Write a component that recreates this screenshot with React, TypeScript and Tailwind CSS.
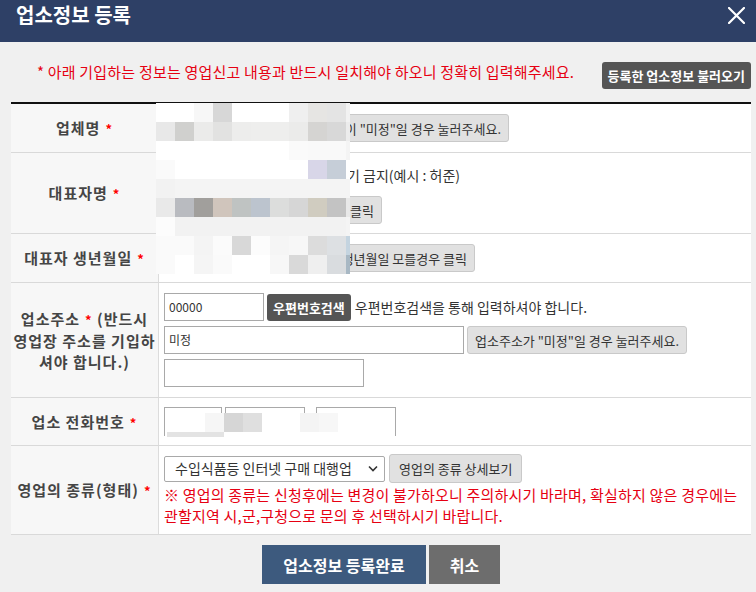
import React from "react";

const mosaic: string[][] = [
  ["bg-[#ffffff]", "bg-[#ffffff]", "bg-[#f7f7f7]", "bg-[#d7d7d7]", "bg-[#ffffff]", "bg-[#ffffff]", "bg-[#ffffff]", "bg-[#efefef]", "bg-[#e6e5e3]", "bg-[#e4e4e4]", "bg-[#f2f2f2]"],
  ["bg-[#e8e8e8]", "bg-[#d0d0ce]", "bg-[#ebebea]", "bg-[#e2e2e1]", "bg-[#ededec]", "bg-[#eeeeed]", "bg-[#eeeeed]", "bg-[#ebebea]", "bg-[#d5d4d2]", "bg-[#d8d8d8]", "bg-[#ececec]"],
  ["bg-[#ffffff]", "bg-[#ffffff]", "bg-[#ffffff]", "bg-[#ffffff]", "bg-[#ffffff]", "bg-[#ffffff]", "bg-[#ffffff]", "bg-[#fafafa]", "bg-[#f9f9f9]", "bg-[#f9f9f9]", "bg-[#f4f4f4]"],
  ["bg-[#fafafa]", "bg-[#ffffff]", "bg-[#ffffff]", "bg-[#ffffff]", "bg-[#ffffff]", "bg-[#ffffff]", "bg-[#ffffff]", "bg-[#ffffff]", "bg-[#d8d6e8]", "bg-[#c6ced8]", "bg-[#ffffff]"],
  ["bg-[#f2f2f2]", "bg-[#f4f4f4]", "bg-[#f4f4f4]", "bg-[#f4f4f4]", "bg-[#f4f4f4]", "bg-[#f4f4f4]", "bg-[#f4f4f4]", "bg-[#f4f4f4]", "bg-[#f4f4f4]", "bg-[#f4f4f4]", "bg-[#f4f4f4]"],
  ["bg-[#e9e9e9]", "bg-[#b9bbc0]", "bg-[#a19f9c]", "bg-[#d0c5bc]", "bg-[#bfc3c2]", "bg-[#bcc4ce]", "bg-[#dcdddc]", "bg-[#d6d6d6]", "bg-[#d0ccc0]", "bg-[#c3c3c3]", "bg-[#e8e8e8]"],
  ["bg-[#fcfcfc]", "bg-[#f2f2f2]", "bg-[#f2f2f2]", "bg-[#f2f2f2]", "bg-[#f2f2f2]", "bg-[#f2f2f2]", "bg-[#f2f2f2]", "bg-[#f2f2f2]", "bg-[#f2f2f2]", "bg-[#f2f2f2]", "bg-[#f4f4f4]"],
  ["bg-[#fafafa]", "bg-[#fafafa]", "bg-[#f4f4f4]", "bg-[#fbfbfb]", "bg-[#d8d8d8]", "bg-[#fcfcfc]", "bg-[#f5f5f5]", "bg-[#f7f7f7]", "bg-[#dcdcdc]", "bg-[#dde0e3]", "bg-[#c4d4e0]"],
  ["bg-[#fafafa]", "bg-[#ffffff]", "bg-[#f5f5f5]", "bg-[#fafafa]", "bg-[#ffffff]", "bg-[#ffffff]", "bg-[#f7f7f7]", "bg-[#d9d9d9]", "bg-[#efefef]", "bg-[#d9dcdf]", "bg-[#a8b8c4]"],
];

function GrayBtn({ children }: { children: React.ReactNode }) {
  return (
    <button className="h-[28px] shrink-0 whitespace-nowrap rounded-[3px] border border-[#c9c9c9] bg-[#e1e1e1] px-[7px] text-[13px] leading-none text-[#333]">
      {children}
    </button>
  );
}

function Star() {
  return <span className="ml-[5px] text-[13px] font-bold text-[#ff0000]">*</span>;
}

function Label({ children }: { children: React.ReactNode }) {
  return (
    <div className="flex w-[148px] shrink-0 items-center justify-center border-r border-[#dcdcdc] bg-[#f7f7f7] text-center text-[15px] font-bold leading-[21px] tracking-[1px] text-[#454545]">
      <div className="whitespace-nowrap">{children}</div>
    </div>
  );
}

function Input({ className = "", value = "" }: { className?: string; value?: string }) {
  return (
    <div className={`flex shrink-0 items-center border border-[#a9a9a9] bg-white px-[4px] text-[12px] text-[#333] ${className}`}>
      {value}
    </div>
  );
}

export default function App() {
  return (
    <div className="h-[592px] w-[756px] overflow-hidden bg-[#f0f0f0] [font-family:'Noto_Sans_CJK_KR','Noto_Sans',sans-serif]">
      {/* Header */}
      <div className="flex h-[42px] items-start justify-between bg-[#2e4066] pl-[16px] pr-[11px]">
        <div className="pt-[2px] text-[20px] font-bold leading-[26px] text-white">업소정보 등록</div>
        <svg width="17" height="17" viewBox="0 0 17 17" className="mt-[7px]">
          <path d="M1 1 L16 16 M16 1 L1 16" stroke="#ffffff" strokeWidth="2.2" strokeLinecap="square" />
        </svg>
      </div>

      {/* Notice */}
      <div className="flex h-[60px] items-start pl-[37px] pr-[5px] pt-[20px]">
        <div className="whitespace-nowrap text-[15px] leading-[20px] tracking-[0.2px] text-[#e60012]">
          * 아래 기입하는 정보는 영업신고 내용과 반드시 일치해야 하오니 정확히 입력해주세요.
        </div>
        <button className="ml-auto h-[27px] whitespace-nowrap rounded-[3px] bg-[#555555] px-[6px] text-[13px] font-bold leading-none text-white">
          등록한 업소정보 불러오기
        </button>
      </div>

      {/* Table */}
      <div className="relative ml-[11px] w-[740px] border-t-2 border-[#111]">
        {/* Row 1 */}
        <div className="flex h-[49px] border-b border-[#d9d9d9]">
          <Label>
            업체명<Star />
          </Label>
          <div className="flex flex-1 items-center bg-white px-[5px]">
            <div className="flex w-[345px] items-center justify-between">
              <Input className="h-[27px] w-[100px]" />
              <GrayBtn>업체명이 "미정"일 경우 눌러주세요.</GrayBtn>
            </div>
          </div>
        </div>

        {/* Row 2 */}
        <div className="flex h-[81px] border-b border-[#d9d9d9]">
          <Label>
            대표자명<Star />
          </Label>
          <div className="flex flex-1 flex-col justify-center gap-[7px] bg-white px-[5px]">
            <div className="flex h-[27px] w-[296px] items-center justify-between">
              <Input className="h-[27px] w-[90px]" />
              <span className="whitespace-nowrap text-[14px] text-[#333]">※ 띄어쓰기 금지(예시 : 허준)</span>
            </div>
            <div className="flex w-[218px] justify-end">
              <GrayBtn>대표자 확인 클릭</GrayBtn>
            </div>
          </div>
        </div>

        {/* Row 3 */}
        <div className="flex h-[49px] border-b border-[#d9d9d9]">
          <Label>
            대표자 생년월일<Star />
          </Label>
          <div className="flex flex-1 items-center bg-white px-[5px]">
            <div className="flex w-[311px] items-center justify-between">
              <Input className="h-[27px] w-[100px]" />
              <GrayBtn>생년월일 모를경우 클릭</GrayBtn>
            </div>
          </div>
        </div>

        {/* Row 4 */}
        <div className="flex h-[115px] border-b border-[#d9d9d9]">
          <Label>
            업소주소<Star /> (반드시
            <br />
            영업장 주소를 기입하
            <br />
            셔야 합니다.)
          </Label>
          <div className="flex flex-1 flex-col justify-center gap-[5px] bg-white px-[5px]">
            <div className="flex items-center">
              <Input className="h-[28px] w-[100px]" value="00000" />
              <button className="ml-[3px] h-[27px] whitespace-nowrap rounded-[3px] bg-[#555555] px-[6px] text-[13px] font-bold leading-none text-white">
                우편번호검색
              </button>
              <span className="ml-[4px] whitespace-nowrap text-[14px] text-[#333]">우편번호검색을 통해 입력하셔야 합니다.</span>
            </div>
            <div className="flex items-center">
              <Input className="h-[28px] w-[300px]" value="미정" />
              <div className="ml-[3px]">
                <GrayBtn>업소주소가 "미정"일 경우 눌러주세요.</GrayBtn>
              </div>
            </div>
            <Input className="h-[28px] w-[200px]" />
          </div>
        </div>

        {/* Row 5 */}
        <div className="flex h-[48px] border-b border-[#d9d9d9]">
          <Label>
            업소 전화번호<Star />
          </Label>
          <div className="relative flex flex-1 items-center bg-white px-[5px]">
            <Input className="h-[29px] w-[58px]" />
            <Input className="ml-[3px] h-[29px] w-[80px]" />
            <Input className="ml-[11px] h-[29px] w-[80px]" />
            {/* blurred overlay */}
            <div className="absolute left-[6px] top-[15px] h-[28px] w-[230px] bg-white" />
            <div className="absolute left-[46px] top-[15px] h-[19px] w-[19px] bg-[#f6f6f6]" />
            <div className="absolute left-[65px] top-[15px] h-[19px] w-[19px] bg-[#d6d6d6]" />
            <div className="absolute left-[84px] top-[15px] h-[19px] w-[19px] bg-[#dfdfdf]" />
            <div className="absolute left-[141px] top-[15px] h-[19px] w-[19px] bg-[#f4f4f4]" />
            <div className="absolute left-[160px] top-[15px] h-[19px] w-[19px] bg-[#f7f7f7]" />
            <div className="absolute left-[8px] top-[34px] h-[5px] w-[57px] bg-[#e3e3e3]" />
          </div>
        </div>

        {/* Row 6 */}
        <div className="flex h-[89px] border-b border-[#d9d9d9]">
          <Label>
            영업의 종류(형태)<Star />
          </Label>
          <div className="flex flex-1 flex-col justify-center bg-white px-[5px]">
            <div className="flex items-center">
              <div className="flex h-[26px] w-[221px] items-center justify-between rounded-[2px] border border-[#a9a9a9] bg-white pl-[10px] pr-[6px] text-[14px] text-[#333]">
                <span className="whitespace-nowrap">수입식품등 인터넷 구매 대행업</span>
                <svg width="10" height="7" viewBox="0 0 10 7">
                  <path d="M1 1.5 L5 5.5 L9 1.5" fill="none" stroke="#333" strokeWidth="1.6" />
                </svg>
              </div>
              <button className="ml-[4px] h-[29px] whitespace-nowrap rounded-[3px] border border-[#c9c9c9] bg-[#e1e1e1] px-[9px] text-[13px] leading-none text-[#333]">
                영업의 종류 상세보기
              </button>
            </div>
            <div className="mt-[1px] whitespace-nowrap text-[15px] leading-[21px] tracking-[0.2px] text-[#e60012]">
              ※ 영업의 종류는 신청후에는 변경이 불가하오니 주의하시기 바라며, 확실하지 않은 경우에는
              <br />
              관할지역 시,군,구청으로 문의 후 선택하시기 바랍니다.
            </div>
          </div>
        </div>

        {/* Mosaic overlay (rows 1-3) */}
        <div className="absolute left-[145px] top-[-1px] flex flex-col">
          {mosaic.map((row, r) => (
            <div key={r} className="flex">
              {row.map((c, i) => (
                <div key={i} className={`h-[19px] ${i === 10 ? "w-[4px]" : "w-[19px]"} ${c}`} />
              ))}
            </div>
          ))}
        </div>
      </div>

      {/* Bottom buttons */}
      <div className="mt-[10px] ml-[11px] flex w-[740px] justify-center gap-[3px]">
        <button className="h-[39px] w-[164px] bg-[#3d5a7e] text-[16px] font-bold text-white">업소정보 등록완료</button>
        <button className="h-[39px] w-[71px] bg-[#6d6d6d] text-[16px] font-bold text-white">취소</button>
      </div>
    </div>
  );
}
